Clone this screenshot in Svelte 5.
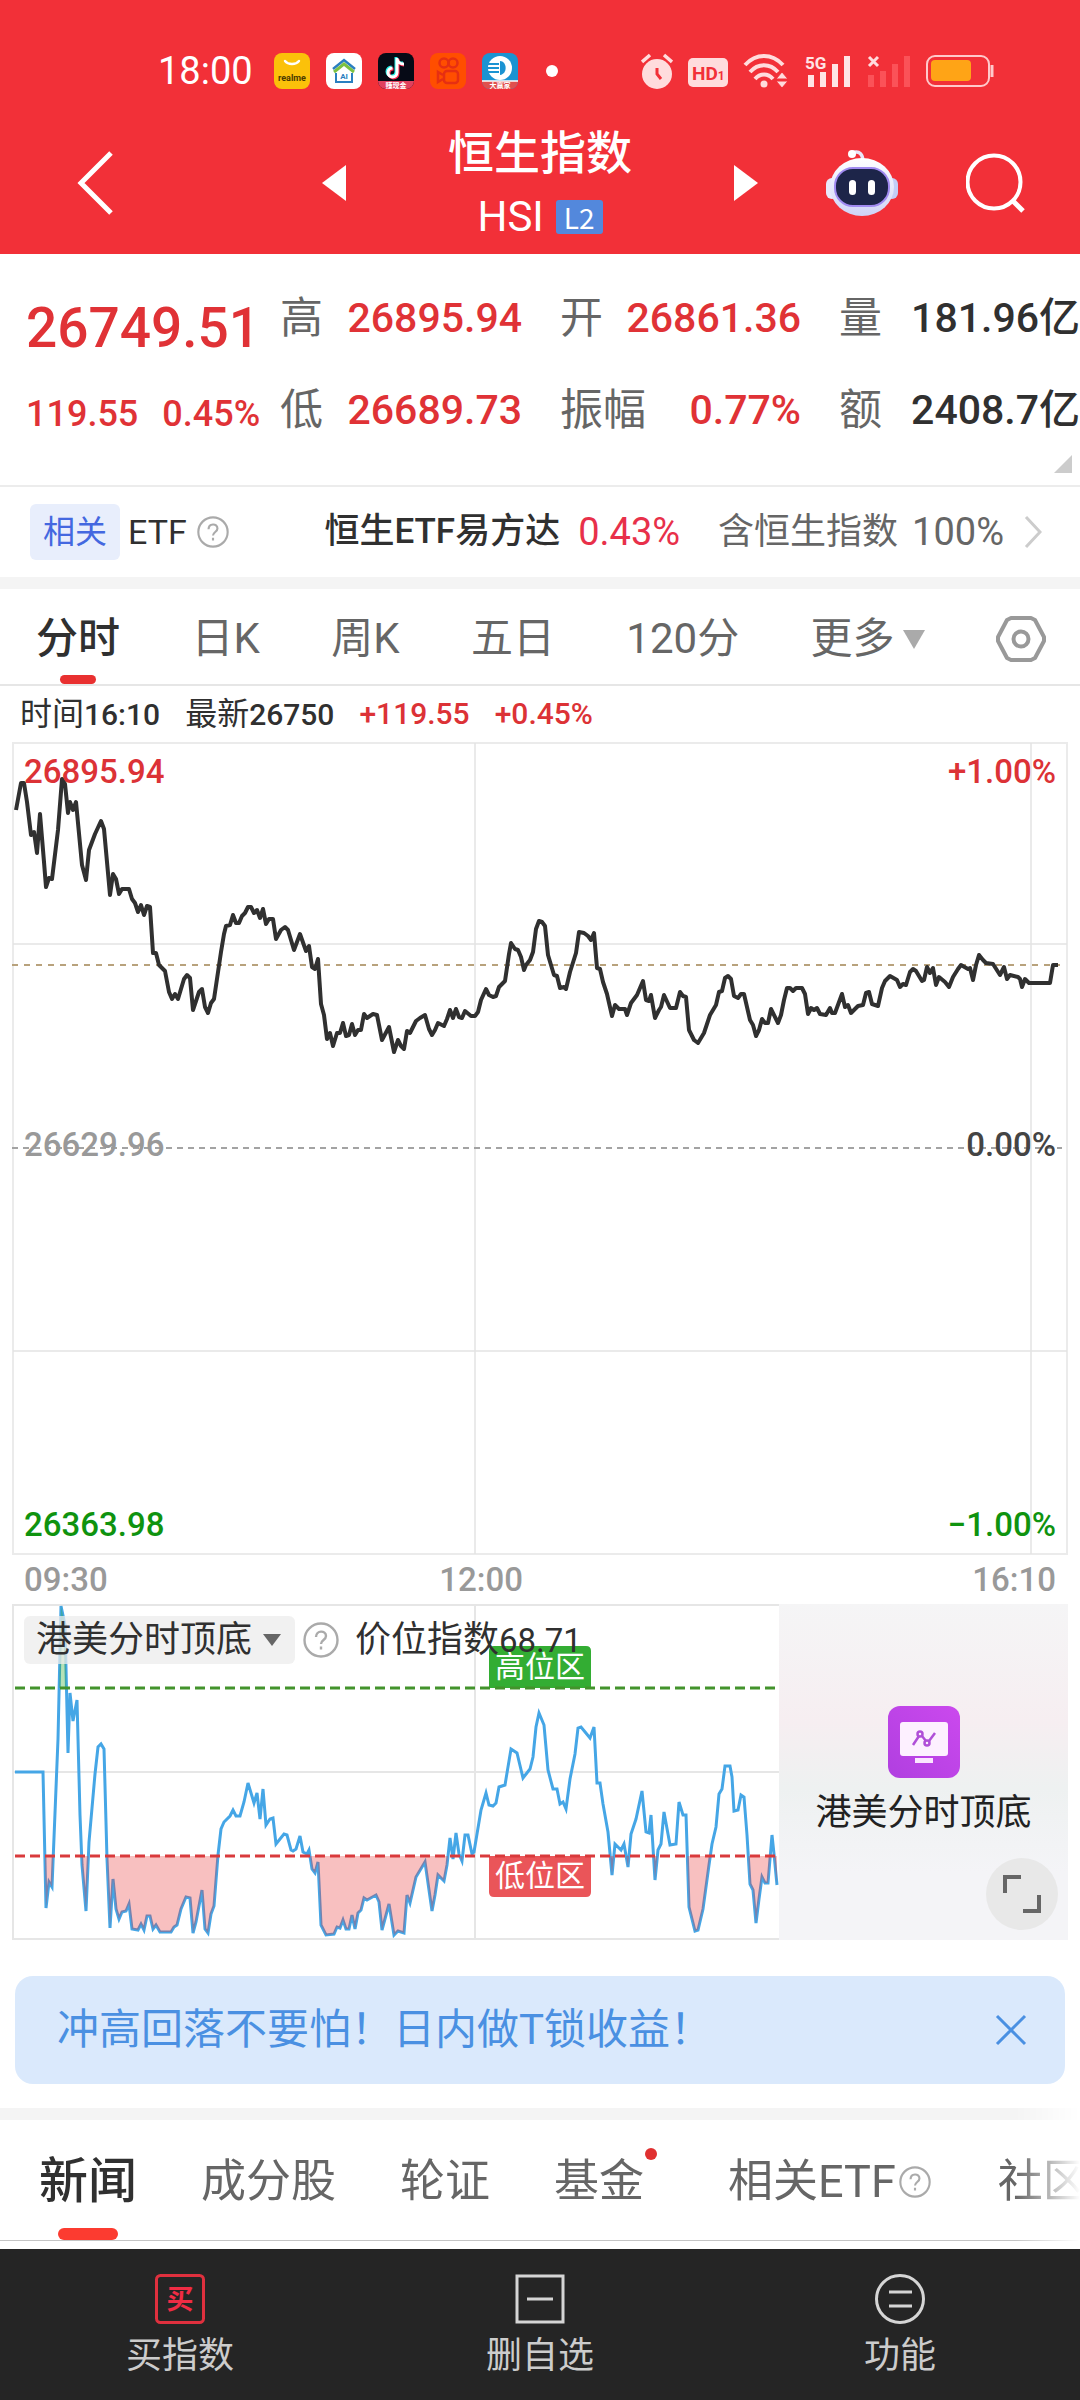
<script>
  const periods = ['分时', '日K', '周K', '五日', '120分'];
  let period = $state('分时');

  const sections = [
    { name: '新闻' },
    { name: '成分股' },
    { name: '轮证' },
    { name: '基金', dot: true },
    { name: '相关ETF', help: true },
    { name: '社区' }
  ];
  let section = $state('新闻');
  let bannerOpen = $state(true);
  let indicator = $state('港美分时顶底');

  const price =
    '16,808 21,781 24,781 27,800 31,833 34,830 37,851 40,812 44,860 46,885 49,876 52,877 58,828 62,777 65,782 68,811 70,800 73,808 76,800 82,863 86,878 89,848 95,832 101,819 104,827 110,893 113,872 116,877 119,892 122,887 129,887 132,897 135,901 138,910 141,903 144,913 147,904 150,905 153,951 156,951 159,963 165,969 169,990 172,997 175,992 178,997 184,977 187,973 190,976 193,1008 199,990 202,987 205,1005 208,1011 211,1001 214,997 221,950 224,932 226,924 230,923 233,913 236,921 239,921 242,914 245,911 248,905 251,905 254,911 257,908 260,916 263,907 266,922 269,917 273,917 276,937 281,928 285,925 288,928 294,948 300,932 306,949 309,944 312,965 315,967 318,957 321,1002 324,1013 327,1037 330,1031 333,1044 337,1031 340,1031 343,1021 346,1034 349,1033 352,1022 355,1033 358,1028 361,1028 364,1012 367,1016 373,1012 377,1013 382,1038 389,1025 394,1050 398,1038 401,1044 404,1047 407,1029 410,1031 416,1019 420,1016 425,1013 429,1027 432,1033 435,1028 438,1021 444,1024 447,1017 450,1008 453,1016 456,1007 459,1015 462,1016 465,1009 471,1014 475,1014 478,1010 481,998 486,987 489,993 493,995 496,994 499,985 505,979 509,952 511,941 515,947 518,948 521,955 524,968 526,963 530,958 533,950 536,927 539,919 542,920 545,924 548,953 554,973 557,974 560,986 564,985 566,987 570,970 576,951 579,930 584,931 588,934 591,938 594,931 597,966 600,967 603,980 607,992 612,1014 615,1003 619,1007 625,1007 627,1013 631,1001 637,993 643,979 646,998 649,999 651,993 655,1016 659,1008 661,1005 664,993 670,1006 676,1006 680,990 683,994 686,995 689,1028 694,1038 698,1041 704,1031 710,1013 716,1003 719,990 722,989 725,976 728,974 731,977 734,994 738,996 741,992 744,992 750,1018 753,1023 756,1034 759,1028 762,1017 765,1021 768,1021 771,1007 778,1021 781,1013 784,998 787,986 790,986 793,989 796,986 802,986 805,992 808,1012 811,1006 814,1008 817,1006 820,1012 826,1013 830,1006 832,1011 835,1011 842,992 845,1005 848,1003 851,1011 858,1004 863,1003 866,991 869,990 872,1002 878,1004 882,986 885,979 890,974 897,978 900,985 903,982 906,983 910,970 913,967 916,969 922,979 924,978 927,965 930,971 933,966 936,983 939,975 945,980 949,985 953,975 958,967 961,963 968,967 970,966 973,978 976,963 979,953 983,958 986,961 993,962 1000,973 1004,965 1007,977 1010,973 1018,975 1020,977 1022,985 1025,977 1029,981 1050,981 1053,963 1058,963';

  const level =
    '15,1770 43,1770 46,1906 49,1880 52,1885 58,1737 61,1604 65,1623 68,1751 70,1691 73,1719 77,1698 80,1813 82,1863 86,1909 89,1840 95,1772 98,1745 101,1742 104,1747 107,1857 110,1926 113,1877 116,1907 119,1917 122,1910 126,1909 129,1902 132,1927 138,1928 141,1922 144,1928 147,1914 150,1914 153,1927 156,1923 160,1930 171,1930 174,1925 177,1923 181,1907 186,1895 190,1896 193,1931 196,1920 202,1888 205,1927 208,1931 211,1912 214,1904 218,1853 221,1827 224,1820 230,1814 233,1808 236,1814 240,1814 244,1800 248,1781 254,1801 257,1791 260,1817 263,1787 266,1823 270,1817 273,1816 276,1842 284,1832 287,1833 291,1848 293,1849 296,1847 300,1834 303,1850 307,1852 309,1848 312,1867 315,1871 318,1860 321,1923 326,1933 334,1932 337,1925 340,1926 343,1918 346,1927 349,1927 352,1913 355,1927 358,1911 361,1908 364,1896 367,1898 376,1893 379,1900 382,1928 389,1902 394,1933 398,1929 404,1931 407,1893 410,1901 416,1875 425,1860 432,1909 435,1893 438,1873 444,1879 447,1863 450,1836 453,1857 456,1831 459,1852 462,1859 465,1833 468,1833 472,1852 474,1850 481,1808 486,1791 489,1803 493,1804 496,1801 499,1785 505,1783 511,1747 517,1751 523,1776 530,1767 533,1755 536,1725 539,1711 544,1723 548,1768 553,1787 557,1787 560,1802 563,1800 566,1807 570,1777 575,1752 578,1726 581,1725 590,1736 594,1725 597,1781 600,1781 603,1802 608,1830 612,1873 615,1842 621,1848 624,1842 628,1865 631,1832 636,1817 642,1789 646,1830 649,1831 651,1813 655,1878 658,1848 661,1842 664,1810 670,1843 676,1842 679,1800 683,1813 686,1813 689,1905 695,1929 698,1928 703,1907 709,1863 712,1842 716,1825 719,1792 722,1787 725,1764 730,1764 732,1775 734,1809 738,1808 741,1793 744,1795 747,1833 750,1882 753,1888 756,1921 759,1897 762,1875 765,1881 768,1881 772,1833 774,1852 777,1883';
</script>

{#snippet help(cls)}
  <svg class={cls} viewBox="0 0 36 36" fill="none" stroke="#aaa" stroke-width="2.4" aria-hidden="true">
    <circle cx="18" cy="18" r="16.5" />
    <path d="M13 15c0-7 10-7 10-1 0 4-5 4-5 8M18 24.500v3" />
  </svg>
{/snippet}

<div class="app">
  <header>
    <div class="status">
      <span class="clock">18:00</span>
      <div class="apps">
        <svg viewBox="0 0 36 36"><rect width="36" height="36" rx="8" fill="#fbc10a" /><path d="M11 8c3 4 11 4 14 0" fill="none" stroke="#fff" stroke-width="2.400" stroke-linecap="round" /><text x="18" y="28" text-anchor="middle" class="realme">realme</text></svg>
        <svg viewBox="0 0 36 36"><rect width="36" height="36" rx="8" fill="#fff" /><path d="M7 16 18 7l11 9" fill="none" stroke="#2a7fc0" stroke-width="2.500" /><path d="M8 19l10-8 10 8" fill="none" stroke="#7cc142" stroke-width="3" /><path d="M10 20v9h16v-9" fill="none" stroke="#2a7fc0" stroke-width="2" /><text x="18" y="26" text-anchor="middle" class="ai">AI</text></svg>
        <svg viewBox="0 0 36 36"><rect width="36" height="36" rx="8" fill="#060a16" /><path d="M0 28h36a8 8 0 0 1-8 8H8a8 8 0 0 1-8-8z" fill="#e0405e" /><g fill="none" stroke-width="3"><path d="M18 4v14.500a4.500 4.500 0 1 1-4.500-4.500M18 5c1 4 4 5 7 5" stroke="#25f0ea" /><path d="M20 6v14.500a4.500 4.500 0 1 1-4.500-4.500M20 7c1 4 4 5 6 5" stroke="#fe2c55" /><path d="M19 5v14.500a4.500 4.500 0 1 1-4.500-4.500M19 6c1 4 4 5 7 5" stroke="#fff" /></g><text x="18" y="35" text-anchor="middle" class="tag">赚现金</text></svg>
        <svg viewBox="0 0 36 36"><rect width="36" height="36" rx="8" fill="#ff4e00" /><g fill="none" stroke="#e62f12" stroke-width="2.500"><circle cx="14" cy="10" r="4.500" /><circle cx="23" cy="10" r="4.500" /><rect x="14" y="18" width="14" height="12" rx="3" /><path d="M13 22l-5-3v10l5-3" /></g></svg>
        <svg viewBox="0 0 36 36"><rect width="36" height="36" rx="8" fill="#1b93d2" /><circle cx="18" cy="15" r="12" fill="#fff" /><path d="M18 8c7 0 8 13 0 14z" fill="#1b93d2" /><path d="M6 11h11M5 15h12M6 19h11" stroke="#1b93d2" stroke-width="2" /><path d="M0 28h36a8 8 0 0 1-8 8H8a8 8 0 0 1-8-8z" fill="#e0504e" /><path d="M0 28h36" stroke="#fff" stroke-width="1.500" /><text x="18" y="35" text-anchor="middle" class="tag">大赢家</text></svg>
        <i class="more"></i>
      </div>
      <div class="signals">
        <svg width="32" height="36" viewBox="0 0 32 36"><circle cx="16" cy="21" r="15" fill="#ffdcdd" /><path d="M1 9l8-7M23 2l8 7" stroke="#ffdcdd" stroke-width="3.500" /><path d="M16 15v6l4 5" fill="none" stroke="#f23038" stroke-width="3" /></svg>
        <svg width="40" height="36" viewBox="0 0 40 36"><rect y="5" width="40" height="29" rx="5" fill="#ffdcdd" /><text x="4" y="27" class="hd">HD<tspan class="one">1</tspan></text></svg>
        <svg width="46" height="36" viewBox="0 0 46 36"><g fill="none" stroke="#ffdcdd" stroke-width="4"><path d="M2 12c11-12 27-12 38 0M7 19c8-9 20-9 28 0M12 26c5-6 13-6 18 0" /></g><circle cx="21" cy="31" r="3.500" fill="#ffdcdd" /><path d="M39 19l6 7H33zM33 28h12l-6 7z" fill="#ffdcdd" stroke="#f23038" /></svg>
        <svg width="48" height="36" viewBox="0 0 48 36"><path d="M4 22h6v12H4zM16 19h6v15h-6zM28 11h6v23h-6zM40 3h6v31h-6z" fill="#ffe4e5" /><text x="1" y="16" class="g5">5G</text></svg>
        <svg width="44" height="36" viewBox="0 0 44 36"><path d="M1 22h6v12H1zM13 18h6v16h-6zM25 11h6v23h-6zM37 3h6v31h-6z" fill="#fb5258" /><path d="M2 4l9 9M11 4l-9 9" stroke="#ffdcdd" stroke-width="3" /></svg>
        <svg width="68" height="36" viewBox="0 0 68 36"><rect x="1" y="3" width="62" height="30" rx="8" fill="none" stroke="#ffc9cb" stroke-width="2" /><rect x="5" y="7" width="40" height="21" rx="4" fill="#ffa416" /><path d="M66 12v12" stroke="#ffc9cb" stroke-width="3" /></svg>
      </div>
    </div>
    <div class="nav">
      <button class="back" aria-label="返回"><svg width="38" height="64" viewBox="0 0 38 64"><path d="M35 2 5 32l30 30" fill="none" stroke="#fff" stroke-width="5" /></svg></button>
      <div class="switch">
        <button aria-label="上一个"><svg width="24" height="36" viewBox="0 0 24 36"><path d="M24 0v36L0 18z" fill="#fff" /></svg></button>
        <div class="title">
          <h1>恒生指数</h1>
          <p>HSI <span>L2</span></p>
        </div>
        <button aria-label="下一个"><svg width="24" height="36" viewBox="0 0 24 36"><path d="M0 0v36l24-18z" fill="#fff" /></svg></button>
      </div>
      <div class="tools">
        <button aria-label="智能助手">
          <svg width="72" height="68" viewBox="0 0 72 68">
            <defs><linearGradient id="shell" x2="0" y2="1"><stop stop-color="#fff" /><stop offset="1" stop-color="#cfd3f6" /></linearGradient></defs>
            <path d="M26 4c8-3 11 2 11 9" fill="none" stroke="#e9e6f8" stroke-width="3.500" /><circle cx="26" cy="5" r="4" fill="#fff" />
            <rect x="0" y="29" width="12" height="21" rx="6" fill="#e8e9fb" /><rect x="60" y="29" width="12" height="21" rx="6" fill="#c3cdf6" />
            <ellipse cx="36" cy="38" rx="32" ry="29" fill="url(#shell)" />
            <rect x="9" y="19" width="54" height="38" rx="18" fill="#1d2549" stroke="#a08af0" stroke-width="2" />
            <rect x="23" y="31" width="7" height="15" rx="3.500" fill="#fff" /><rect x="42" y="31" width="7" height="15" rx="3.500" fill="#fff" />
          </svg>
        </button>
        <button aria-label="搜索"><svg width="60" height="62" viewBox="0 0 60 62"><g fill="none" stroke="#fff" stroke-width="4"><circle cx="28" cy="30" r="26.500" /><path d="M47 49l10 10" stroke-width="5" /></g></svg></button>
      </div>
    </div>
  </header>

  <section class="quote">
    <div class="last"><strong>26749.51</strong><div class="chg"><span>119.55</span><span>0.45%</span></div></div>
    <dl>
      <div><dt>高</dt><dd>26895.94</dd></div>
      <div><dt>开</dt><dd>26861.36</dd></div>
      <div><dt>量</dt><dd class="dark">181.96亿</dd></div>
      <div><dt>低</dt><dd>26689.73</dd></div>
      <div><dt>振幅</dt><dd>0.77%</dd></div>
      <div><dt>额</dt><dd class="dark">2408.7亿</dd></div>
    </dl>
    <svg class="corner" width="18" height="18" viewBox="0 0 18 18" aria-hidden="true"><path d="M18 0v18H0z" fill="#ccc" /></svg>
  </section>

  <a class="etf" href="#etf">
    <span class="badge">相关</span>
    <span class="kind">ETF</span>
    {@render help('q32')}
    <span class="fund">恒生ETF易方达</span>
    <span class="pct">0.43%</span>
    <span class="hold">含恒生指数</span>
    <span class="full">100%</span>
    <svg width="18" height="34" viewBox="0 0 18 34" aria-hidden="true"><path d="M2 2l14 15L2 32" fill="none" stroke="#ccc" stroke-width="3" /></svg>
  </a>

  <nav class="periods">
    {#each periods as p}
      <button class:on={period === p} onclick={() => (period = p)}>{p}</button>
    {/each}
    <button class="drop" aria-haspopup="menu">更多<svg width="22" height="19" viewBox="0 0 22 19"><path d="M0 0h22L11 19z" fill="#aaa" /></svg></button>
    <button aria-label="设置" class="gear"><svg width="50" height="48" viewBox="0 0 50 48"><g fill="none" stroke="#999" stroke-width="4"><path d="M15 3h20l4 2 9 17v4l-9 17-4 2H15l-4-2L2 26v-4l9-17z" stroke-linejoin="round" /><circle cx="25" cy="24" r="7.500" /></g></svg></button>
  </nav>

  <p class="info"><span>时间<b>16:10</b></span><span>最新<b>26750</b></span><span class="up">+119.55</span><span class="up">+0.45%</span></p>

  <section class="chart">
    <svg viewBox="12 740 1056 813" aria-hidden="true">
      <g fill="none" stroke="#e4e4e4" stroke-width="1.500">
        <rect x="13" y="741" width="1054" height="811" stroke="#ebebeb" stroke-width="2" />
        <path d="M13 942h1054M13 1349h1054M475 741v811M1031 741v811" />
      </g>
      <path d="M12 963h1048" stroke="#b8a27c" stroke-width="2" stroke-dasharray="6 6" />
      <path d="M12 1146h1050" stroke="#a3a3a3" stroke-width="2" stroke-dasharray="6 5" />
      <polyline points={price} fill="none" stroke="#303030" stroke-width="4" stroke-linejoin="round" />
    </svg>
    <div class="scale">
      <p class="up"><span>26895.94</span><span>+1.00%</span></p>
      <p class="flat"><span>26629.96</span><span>0.00%</span></p>
      <p class="down"><span>26363.98</span><span>−1.00%</span></p>
    </div>
  </section>
  <div class="times"><span>09:30</span><span>12:00</span><span>16:10</span></div>

  <section class="sub">
    <div class="plot">
      <svg viewBox="12 1602 767 336" aria-hidden="true">
        <defs>
          <clipPath id="low"><rect x="12" y="1854" width="767" height="84" /></clipPath>
          <clipPath id="high"><rect x="12" y="1602" width="767" height="84" /></clipPath>
        </defs>
        <path d="M12 1603h767M12 1937h767M13 1602v336M475 1602v336M12 1770h767" fill="none" stroke="#e6e6e6" stroke-width="2" />
        <polyline points={level} fill="none" stroke="#45a6e6" stroke-width="3" />
        <polygon points={'15,1854 ' + level + ' 777,1854'} fill="#e93030" fill-opacity="0.300" clip-path="url(#low)" />
        <polygon points={'15,1686 ' + level + ' 777,1686'} fill="#2eab2e" fill-opacity="0.350" clip-path="url(#high)" />
        <path d="M489 1686v-37q0-5 5-5h92q5 0 5 5v37z" fill="#33ad33" />
        <path d="M489 1854v36q0 5 5 5h92q5 0 5-5v-36z" fill="#ea5559" />
        <path d="M15 1686h764" stroke="#43932c" stroke-width="3" stroke-dasharray="10 5" />
        <path d="M15 1854h764" stroke="#d93a3c" stroke-width="3" stroke-dasharray="10 5" />
        <text x="540" y="1675" text-anchor="middle" class="zone">高位区</text>
        <text x="540" y="1884" text-anchor="middle" class="zone">低位区</text>
      </svg>
      <div class="legend">
        <label>
          <select bind:value={indicator} aria-label="指标"><option>港美分时顶底</option></select>
          <svg width="18" height="12" viewBox="0 0 18 12" aria-hidden="true"><path d="M0 0h18L9 12z" fill="#666" /></svg>
        </label>
        {@render help('q36')}
        <span>价位指数<b>68.71</b></span>
      </div>
    </div>
    <div class="promo">
      <svg width="72" height="72" viewBox="0 0 72 72" aria-hidden="true">
        <defs><linearGradient id="violet" x1="1" y1="0" x2="0" y2="1"><stop stop-color="#cb49ee" /><stop offset="1" stop-color="#b03fe0" /></linearGradient></defs>
        <rect width="72" height="72" rx="12" fill="url(#violet)" /><rect x="12" y="16" width="48" height="34" rx="3" fill="#fdf0ff" /><rect x="27" y="52" width="18" height="5" fill="#fbe5ff" />
        <g fill="none" stroke="#b04fd8" stroke-width="2.500"><path d="M25 39l6-9M34 30l4 5M41 35l6-8" /><circle cx="32" cy="28" r="2.500" /><circle cx="39" cy="37" r="2.500" /></g>
      </svg>
      <p>港美分时顶底</p>
      <button aria-label="全屏"><svg width="38" height="38" viewBox="0 0 38 38"><path d="M2 18V2h16M36 20v16H20" fill="none" stroke="#666" stroke-width="4" /></svg></button>
    </div>
  </section>

  {#if bannerOpen}
    <aside>
      <span>冲高回落不要怕！日内做T锁收益！</span>
      <button aria-label="关闭" onclick={() => (bannerOpen = false)}><svg width="32" height="32" viewBox="0 0 32 32"><path d="M2 2l28 28M30 2 2 30" stroke="#4a90e2" stroke-width="3" /></svg></button>
    </aside>
  {/if}

  <nav class="sections">
    {#each sections as s}
      <button class:on={section === s.name} class:dot={s.dot} onclick={() => (section = s.name)}>{s.name}{#if s.help}{@render help('q32')}{/if}</button>
    {/each}
  </nav>

  <footer>
    <button><svg width="50" height="50" viewBox="0 0 50 50"><rect x="1.500" y="1.500" width="47" height="47" rx="4" fill="none" stroke="#e0303e" stroke-width="3" /><text x="25" y="35" text-anchor="middle" class="buy">买</text></svg>买指数</button>
    <button><svg width="50" height="50" viewBox="0 0 50 50"><path d="M2 2h46v46H2zM12 25h26" fill="none" stroke="#d5d5d5" stroke-width="3" /></svg>删自选</button>
    <button><svg width="50" height="50" viewBox="0 0 50 50"><circle cx="25" cy="25" r="23.500" fill="none" stroke="#d5d5d5" stroke-width="3" /><path d="M14 18h23M14 32h23" stroke="#d5d5d5" stroke-width="3" /></svg>功能</button>
  </footer>
</div>

<style>
  :global(body) { background: #fff; }
  .app { font-family: Roboto, "Noto Sans CJK SC", sans-serif; color: #303030; overflow: hidden; }
  p, h1, dl, dd { margin: 0; font-weight: 400; }
  b { font-weight: inherit; }
  button { border: 0; padding: 0; background: none; font: inherit; color: inherit; display: flex; align-items: center; }
  svg { display: block; flex: none; }

  header { background: #f23038; color: #fff; padding-bottom: 3px; }
  .status { display: flex; align-items: center; justify-content: space-between; padding: 47px 86px 0 158px; height: 48px; }
  .clock { font-weight: 400; font-size: 38px; line-height: 48px; width: 96px; margin-right: 20px; }
  .apps { display: flex; align-items: center; gap: 16px; flex: 1; }
  .apps svg { width: 36px; height: 36px; }
  .more { width: 12px; height: 12px; border-radius: 50%; background: #fff; margin-left: 12px; }
  .realme { font: 700 9px Roboto, sans-serif; fill: #4a3a00; }
  .ai { font: 700 8px Roboto, sans-serif; fill: #2a7fc0; }
  .tag { font: 700 7px "Noto Sans CJK SC", sans-serif; fill: #fff; }
  .signals { display: flex; align-items: center; gap: 15px; }
  .hd { font: 700 19px Roboto, sans-serif; fill: #f23038; }
  .one { font-size: 12px; }
  .g5 { font: 700 17px Roboto, sans-serif; fill: #ffe4e5; stroke: #f23038; stroke-width: 2px; paint-order: stroke; }
  .nav { display: grid; grid-template-columns: 1fr auto 1fr; align-items: center; padding: 0 54px; margin-top: 20px; }
  .back { margin-left: 22px; }
  .switch { display: flex; align-items: center; gap: 102px; }
  .title { text-align: center; }
  h1 { font: 500 46px/68px "Noto Sans CJK SC", sans-serif; }
  .title p { display: flex; justify-content: center; align-items: center; gap: 12px; font-size: 42px; line-height: 68px; }
  .title span { font: 400 28px/34px "Noto Sans CJK SC", sans-serif; background: #5388dc; border-radius: 3px; padding: 0 8px; }
  .tools { display: flex; align-items: center; justify-content: flex-end; gap: 68px; }

  .quote { display: flex; position: relative; padding: 32px 0 27px 26px; border-bottom: 2px solid #ececec; }
  .last, .quote dd { color: #e03236; font-weight: 500; }
  .last { width: 254px; flex: none; }
  .last strong { display: block; font-size: 55px; line-height: 84px; font-weight: 500; }
  .chg { display: flex; gap: 24px; font-size: 36px; line-height: 88px; }
  dl { flex: 1; display: grid; align-content: start; grid-template-columns: 280fr 279fr 241fr; row-gap: 28px; }
  dl div { display: flex; justify-content: space-between; }
  dt { font-size: 43px; line-height: 64px; color: #666; }
  dd { font-size: 41px; line-height: 64px; margin-right: 38px; }
  .quote .dark { color: #303030; margin-right: 0; }
  .corner { position: absolute; right: 8px; bottom: 12px; }

  .etf { display: flex; align-items: center; padding: 17px 38px 17px 30px; text-decoration: none; color: inherit; font-size: 36px; line-height: 56px; border-bottom: 12px solid #f4f4f4; }
  .badge { background: #e8eefc; color: #4468e0; border-radius: 6px; font-size: 32px; padding: 0 13px; }
  .kind { margin: 0 10px 0 8px; font-size: 34px; }
  .q32 { width: 32px; height: 32px; }
  .q36 { width: 36px; height: 36px; }
  .fund { margin-left: auto; font-weight: 500; font-size: 35px; }
  .pct { color: #e8304a; font-size: 38px; margin: 0 38px 0 18px; }
  .hold { color: #666; }
  .full { color: #666; font-size: 38px; margin: 0 20px 0 14px; }

  .periods { display: flex; justify-content: space-between; padding: 0 34px 0 36px; border-bottom: 2px solid #e6e6e6; color: #666; font-size: 42px; line-height: 90px; }
  .periods button { padding-top: 5px; }
  .on { position: relative; color: #303030; font-weight: 500; }
  .on::after { content: ""; position: absolute; left: 50%; bottom: 0; translate: -50%; width: 36px; height: 9px; border-radius: 5px; background: #e93030; }
  .drop { gap: 8px; }

  .info { display: flex; gap: 25px; padding: 0 20px; font-size: 32px; line-height: 56px; }
  .info b, .info .up { font-size: 30px; font-weight: 500; }
  .info b, .legend b { line-height: 1; }
  .up { color: #dc3236; }

  .chart, .sub { margin: 0 12px; position: relative; }
  .chart > svg, .plot > svg { width: 100%; height: auto; }
  .scale { position: absolute; inset: 8px 12px; display: flex; flex-direction: column; justify-content: space-between; font-size: 33px; line-height: 44px; font-weight: 500; }
  .scale p { display: flex; justify-content: space-between; font-weight: inherit; }
  .scale .flat { color: #444; padding-bottom: 8px; }
  .flat span:first-child { color: #999; }
  .down { color: #0f930f; }
  .times { display: grid; grid-template-columns: 417fr 535fr auto; padding: 0 24px; font-size: 33px; line-height: 49px; color: #999; font-weight: 500; }

  .sub { display: flex; }
  .plot { position: relative; flex: 767; }
  .zone { font: 400 30px "Noto Sans CJK SC", sans-serif; fill: #fff; }
  .legend { position: absolute; left: 12px; top: 12px; display: flex; align-items: center; font-size: 36px; line-height: 48px; }
  .legend label { display: flex; align-items: center; background: rgb(236 236 236 / 0.75); border-radius: 6px; padding: 0 14px 0 12px; margin-right: 8px; }
  select { appearance: none; border: 0; background: none; padding: 0; margin-right: 10px; font: inherit; line-height: 48px; color: inherit; }
  .legend > span { margin-left: 16px; white-space: nowrap; }
  .legend b { font-size: 33px; }
  .promo { flex: 289; position: relative; display: flex; flex-direction: column; align-items: center; justify-content: center; gap: 10px; background: linear-gradient(#f5f5f6, #f6eef1 35%, #eef1f1 55%, #f4f4f7 80%); font-size: 36px; line-height: 50px; color: #222; }
  .promo button { position: absolute; right: 10px; bottom: 10px; width: 72px; height: 72px; border-radius: 50%; background: #e8e8e8; justify-content: center; }

  aside { display: flex; justify-content: space-between; align-items: center; margin: 36px 15px 24px; padding: 0 38px 0 42px; border-radius: 18px; background: #dae9fc; color: #4a90e2; font-size: 42px; line-height: 108px; }

  .sections { display: flex; gap: 64px; padding: 0 0 0 39px; border-top: 12px solid #f4f4f4; border-bottom: 1px solid #c4c4c4; margin-bottom: 8px; color: #666; font-size: 45px; line-height: 116px; white-space: nowrap; mask-image: linear-gradient(90deg, #000 94%, transparent); }
  .sections button { padding-top: 4px; }
  .sections .on { font-size: 49px; }
  .sections .on::after { width: 60px; height: 12px; border-radius: 6px; background: #fc3b30; }
  .sections .q32 { margin: 0 3px; }
  .dot { position: relative; margin-right: 20px; }
  .dot::after { content: ""; position: absolute; right: -13px; top: 28px; width: 12px; height: 12px; border-radius: 50%; background: #e03030; }

  footer { display: grid; grid-template-columns: repeat(3, 1fr); background: #252525; color: #ccc; font-size: 36px; line-height: 52px; padding: 25px 0 20px; }
  footer button { flex-direction: column; gap: 6px; }
  .buy { font: 700 27px "Noto Sans CJK SC", sans-serif; fill: #f02c44; }
</style>
